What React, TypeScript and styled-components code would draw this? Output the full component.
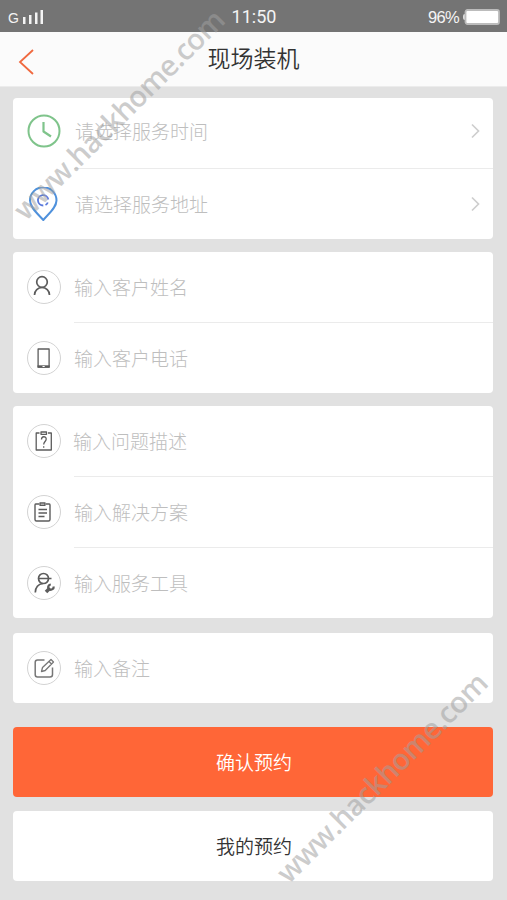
import React from 'react';
import styled, { createGlobalStyle } from 'styled-components';

const GlobalStyle = createGlobalStyle`
  * { box-sizing: border-box; }
  body { margin: 0; background: #e1e1e1; }
`;

const Page = styled.div`
  position: relative;
  width: 507px;
  height: 900px;
  overflow: hidden;
  background: #e1e1e1;
  font-family: "Noto Sans CJK SC", sans-serif;
  font-weight: 300;
`;

const StatusBar = styled.div`
  display: grid;
  grid-template-columns: 1fr auto 1fr;
  align-items: center;
  height: 32px;
  padding: 2px 7px 0 8px;
  background: #747474;
  color: #f4f4f4;
  font-family: "Liberation Sans", Arial, sans-serif;
  font-weight: 400;
`;

const Signal = styled.div`
  display: flex;
  align-items: center;
  gap: 4px;
  font-size: 14px;
  line-height: 20px;
`;

const Carrier = styled.span`
  padding-top: 2px;
`;

const Clock = styled.div`
  font-family: Roboto, sans-serif;
  font-size: 18px;
  line-height: 24px;
`;

const Power = styled.div`
  display: flex;
  align-items: center;
  justify-content: flex-end;
  gap: 4px;
  font-size: 16.5px;
  letter-spacing: -0.7px;
`;

const Header = styled.header`
  display: grid;
  grid-template-columns: 60px 1fr 60px;
  align-items: center;
  height: 55px;
  background: #fbfbfb;
  border-bottom: 1px solid #ececec;
`;

const BackButton = styled.button`
  display: flex;
  padding: 5px 0 0 18px;
  border: 0;
  background: none;
`;

const Title = styled.h1`
  margin: 0;
  padding-bottom: 4px;
  text-align: center;
  font-size: 23px;
  line-height: 32px;
  font-weight: 350;
  color: #333;
`;

const Form = styled.main`
  display: flex;
  flex-direction: column;
  padding: 11px 14px 0 13px;
`;

const Card = styled.section<{ $gap: number }>`
  margin-bottom: ${(p) => p.$gap}px;
  border-radius: 4px;
  background: #fff;
`;

const Row = styled.div<{ $lift?: number }>`
  display: grid;
  grid-template-columns: 61px 1fr 24px;
  align-items: center;
  height: 70px;
  padding-bottom: ${(p) => p.$lift ?? 0}px;
`;

const Divider = styled.div`
  height: 1px;
  margin-left: 61px;
  background: #ebebeb;
`;

const IconSlot = styled.div`
  display: flex;
  padding-left: 13px;
`;

const Placeholder = styled.span<{ $shift?: number }>`
  margin-left: ${(p) => p.$shift ?? 0}px;
  font-size: 19px;
  line-height: 28px;
  color: #bebebe;
`;

const Action = styled.button<{ $primary?: boolean }>`
  height: 70px;
  margin-bottom: 14px;
  padding: 0 0 2px 2px;
  border: 0;
  border-radius: 4px;
  background: ${(p) => (p.$primary ? '#ff6637' : '#fff')};
  color: ${(p) => (p.$primary ? '#fff' : '#333')};
  font-family: inherit;
  font-size: 19px;
  font-weight: 350;
`;

const Watermark = styled.span<{ $x: number; $y: number }>`
  position: absolute;
  left: ${(p) => p.$x}px;
  top: ${(p) => p.$y}px;
  height: 40px;
  line-height: 40px;
  transform-origin: 0 30px;
  transform: rotate(-44.8deg);
  white-space: nowrap;
  pointer-events: none;
  font-family: "Open Sans", sans-serif;
  font-size: 29px;
  font-weight: 600;
  letter-spacing: -0.65px;
  color: rgba(160, 160, 160, 0.53);
`;

type IconName = 'clock' | 'pin' | 'user' | 'phone' | 'question' | 'list' | 'worker' | 'edit';

const glyphs: Record<IconName, React.ReactNode> = {
  clock: (
    <g stroke="#7fc48b" strokeWidth="2">
      <circle cx="18" cy="17" r="15.5" />
      <path d="M17.500 8v9.500l7.500 5" strokeWidth="2.2" />
    </g>
  ),
  pin: (
    <g stroke="#4f91dc" strokeWidth="2">
      <path d="M17.3 33C12 27 4 20.500 4 13.500A13.200 13.200 0 0 1 30.500 13.500C30.500 20.500 22.500 27 17.300 33Z" />
      <path d="M17.300 18.500A5.200 5.200 0 1 1 22.300 12.500M21.800 15.500A5 5 0 0 1 19.500 18" stroke="#5979dc" strokeWidth="1.800" />
    </g>
  ),
  user: (
    <g strokeWidth="1.7">
      <circle cx="16" cy="12" r="5.300" />
      <path d="M8.500 25C8.500 20.500 12 17.500 16 17.500S23.500 20.500 23.500 25" />
    </g>
  ),
  phone: (
    <g>
      <path d="M12.100 8h11v18h-11z" strokeWidth="1.300" />
      <path d="M11.500 25.500h12.200" strokeWidth="2.400" />
      <path d="M16.500 25.500h2.200" stroke="#fff" strokeWidth="1" />
    </g>
  ),
  question: (
    <g strokeWidth="1.300">
      <path d="M13.500 9H10.200v17h15.100V9H22M15 8h5.500v2.300H15z" />
      <path d="M15.500 15.500C15.500 11.800 20.200 12 20.200 15C20.200 17.300 17.700 17.700 17.700 20.500M17.700 22.300v1.500" />
    </g>
  ),
  list: (
    <g strokeWidth="1.400">
      <path d="M13 9H9.700Q9 9 9 10v14.500Q9 26 10.500 26h12q1.500 0 1.500-1.500V10Q24 9 23.300 9H20M14 8h5v2.200h-5zM12.500 14.500h8.500M12.500 18h8.500M12.500 21.500h6" />
    </g>
  ),
  worker: (
    <g strokeWidth="1.700">
      <circle cx="17.500" cy="12.500" r="5" />
      <path d="M12 12.500h13.500M9.300 26.500C9.500 21 12.500 18 17 17.500" />
      <path d="M20 26l4-4" strokeWidth="3.600" />
      <path d="M22.300 22.500a3 3 0 0 1 2.500-4M23.500 23.500a3 3 0 0 0 4.200-3" strokeWidth="2.200" />
    </g>
  ),
  edit: (
    <g strokeWidth="1.500" stroke="#777">
      <path d="M18.500 9h-7Q9.200 9 9.200 11.300v12.200Q9.200 26 11.500 26H24q2.500 0 2.500-2.500V16.500" />
      <path d="M15.500 20.500l1-4 8.500-8 2.500 2.500-8.300 8.500zM23 10.500l2.500 2.500" strokeWidth="1.300" />
    </g>
  ),
};

function Icon({ name }: { name: IconName }) {
  const framed = name !== 'clock' && name !== 'pin';
  return (
    <svg width="35" height="34" viewBox="0 0 35 34" fill="none" stroke="#5c5c5c" strokeLinejoin="round">
      {framed && <circle cx="18" cy="17" r="16.500" stroke="#d3d3d3" strokeWidth="1" />}
      {glyphs[name]}
    </svg>
  );
}

function Chevron() {
  return (
    <svg width="12" height="16" viewBox="0 0 12 16" fill="none" stroke="#cecece" strokeWidth="1.700">
      <path d="M3 1.500l6.500 6.500L3 14.500" />
    </svg>
  );
}

interface Field {
  icon: IconName;
  text: string;
  picks?: boolean;
  lift?: number;
  shift?: number;
}

const groups: { gap: number; fields: Field[] }[] = [
  {
    gap: 13,
    fields: [
      { icon: 'clock', text: '请选择服务时间', picks: true, lift: 5, shift: 1 },
      { icon: 'pin', text: '请选择服务地址', picks: true, shift: 1 },
    ],
  },
  {
    gap: 13,
    fields: [
      { icon: 'user', text: '输入客户姓名' },
      { icon: 'phone', text: '输入客户电话' },
    ],
  },
  {
    gap: 15,
    fields: [
      { icon: 'question', text: '输入问题描述', shift: -1 },
      { icon: 'list', text: '输入解决方案' },
      { icon: 'worker', text: '输入服务工具' },
    ],
  },
  { gap: 24, fields: [{ icon: 'edit', text: '输入备注' }] },
];

export default function App() {
  return (
    <Page>
      <GlobalStyle />
      <StatusBar>
        <Signal>
          <Carrier>G</Carrier>
          <svg width="21" height="16" viewBox="0 0 21 16" fill="#f4f4f4">
            <path d="M0 8h2.500v7H0zM6 6h2.500v9H6zM12 3.500h2.500V15H12zM17.500 1H20v14h-2.500z" />
          </svg>
        </Signal>
        <Clock>11:50</Clock>
        <Power>
          96%
          <svg width="37" height="16" viewBox="0 0 37 16">
            <rect x="0" y="5" width="4" height="6" rx="2" fill="#ddd" />
            <rect x="2.500" y="1" width="33.500" height="14" rx="2" fill="#fff" stroke="#bcbcbc" strokeWidth="1.800" />
          </svg>
        </Power>
      </StatusBar>
      <Header>
        <BackButton aria-label="返回">
          <svg width="16" height="26" viewBox="0 0 16 26" fill="none" stroke="#f0693f" strokeWidth="1.800">
            <path d="M15 1L2 13l13 12" />
          </svg>
        </BackButton>
        <Title>现场装机</Title>
      </Header>
      <Form>
        {groups.map((group) => (
          <Card key={group.fields[0].icon} $gap={group.gap}>
            {group.fields.map((field, i) => (
              <React.Fragment key={field.icon}>
                {i > 0 && <Divider />}
                <Row $lift={field.lift}>
                  <IconSlot>
                    <Icon name={field.icon} />
                  </IconSlot>
                  <Placeholder $shift={field.shift}>{field.text}</Placeholder>
                  {field.picks && <Chevron />}
                </Row>
              </React.Fragment>
            ))}
          </Card>
        ))}
        <Action $primary>确认预约</Action>
        <Action>我的预约</Action>
      </Form>
      <Watermark $x={25} $y={191}>www.hackhome.com</Watermark>
      <Watermark $x={288} $y={854}>www.hackhome.com</Watermark>
    </Page>
  );
}
